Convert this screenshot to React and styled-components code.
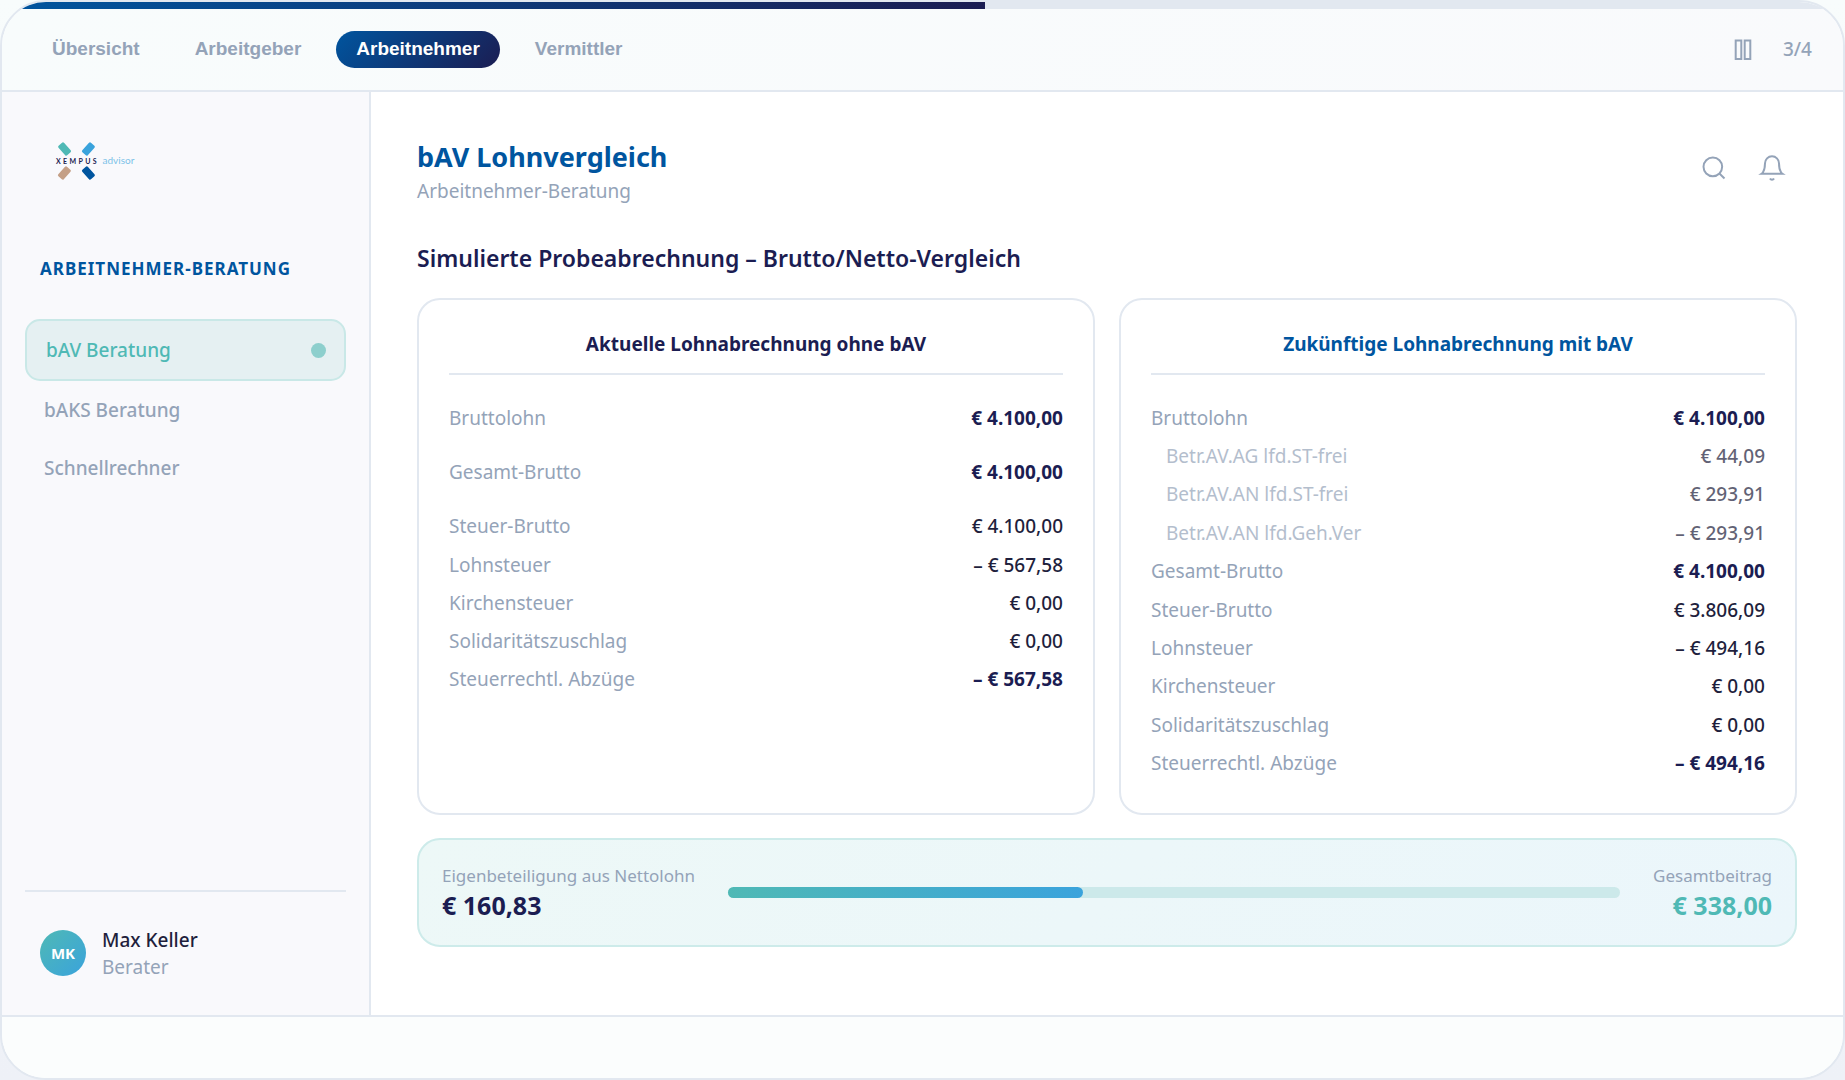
import React from 'react'
import styled, { createGlobalStyle, css } from 'styled-components'

const colors = {
  blue: '#00559f',
  navy: '#1b1d52',
  ink: '#1f1f3d',
  muted: '#94a3b8',
  teal: '#4fb9b5',
  sky: '#3aa3dc',
  line: '#e2e8f0'
}

const tabs = ['Übersicht', 'Arbeitgeber', 'Arbeitnehmer', 'Vermittler']

const navItems = ['bAV Beratung', 'bAKS Beratung', 'Schnellrechner']

const currentRows = [
  { label: 'Bruttolohn', value: '€ 4.100,00', strong: true, spaced: true },
  { label: 'Gesamt-Brutto', value: '€ 4.100,00', strong: true, spaced: true },
  { label: 'Steuer-Brutto', value: '€ 4.100,00' },
  { label: 'Lohnsteuer', value: '– € 567,58' },
  { label: 'Kirchensteuer', value: '€ 0,00' },
  { label: 'Solidaritätszuschlag', value: '€ 0,00' },
  { label: 'Steuerrechtl. Abzüge', value: '– € 567,58', strong: true }
]

const futureRows = [
  { label: 'Bruttolohn', value: '€ 4.100,00', strong: true },
  { label: 'Betr.AV.AG lfd.ST-frei', value: '€ 44,09', sub: true },
  { label: 'Betr.AV.AN lfd.ST-frei', value: '€ 293,91', sub: true },
  { label: 'Betr.AV.AN lfd.Geh.Ver', value: '– € 293,91', sub: true },
  { label: 'Gesamt-Brutto', value: '€ 4.100,00', strong: true },
  { label: 'Steuer-Brutto', value: '€ 3.806,09' },
  { label: 'Lohnsteuer', value: '– € 494,16' },
  { label: 'Kirchensteuer', value: '€ 0,00' },
  { label: 'Solidaritätszuschlag', value: '€ 0,00' },
  { label: 'Steuerrechtl. Abzüge', value: '– € 494,16', strong: true }
]

const Logo = () => (
  <LogoSvg viewBox="0 0 110 60" role="img" aria-label="Xempus advisor">
    <rect x="-6.4" y="-3.7" width="12.8" height="7.4" rx="1.4" fill={colors.teal} transform="translate(24.6 19) rotate(48)" />
    <rect x="-6.4" y="-3.7" width="12.8" height="7.4" rx="1.4" fill={colors.sky} transform="translate(48.4 19) rotate(-48)" />
    <rect x="-6.4" y="-3.7" width="12.8" height="7.4" rx="1.4" fill="#c49f86" transform="translate(24.4 43) rotate(-48)" />
    <rect x="-6.4" y="-3.7" width="12.8" height="7.4" rx="1.4" fill={colors.blue} transform="translate(48.4 43) rotate(48)" />
    <text x="16" y="33.5" fontFamily="Lato, sans-serif" fontWeight="700" fontSize="7" letterSpacing="2.4" fill={colors.navy}>XEMPUS</text>
    <text x="62.5" y="34" fontFamily="Lato, sans-serif" fontWeight="400" fontSize="10" fill="#7cc2e8">advisor</text>
  </LogoSvg>
)

const PauseIcon = () => (
  <Icon viewBox="0 0 28 28" strokeWidth="2">
    <rect x="6.7" y="4.5" width="5.6" height="18.5" />
    <rect x="15.7" y="4.5" width="5.6" height="18.5" />
  </Icon>
)

const SearchIcon = () => (
  <Icon viewBox="0 0 24 24" strokeWidth="1.7">
    <circle cx="11" cy="11" r="8" />
    <path d="m21 21-4.35-4.35" />
  </Icon>
)

const BellIcon = () => (
  <Icon viewBox="0 0 24 24" strokeWidth="1.7">
    <path d="M18 8A6 6 0 0 0 6 8c0 7-3 9-3 9h18s-3-2-3-9" />
    <path d="M13.73 21a2 2 0 0 1-3.46 0" />
  </Icon>
)

const Payslip = ({ title, rows, highlight }) => (
  <Card>
    <CardTitle $highlight={highlight}>{title}</CardTitle>
    <SlipTable $spaced={rows.some(row => row.spaced)} aria-label={title}>
      <tbody>
        {rows.map(row => (
          <SlipRow key={row.label} $spaced={row.spaced} $sub={row.sub}>
            <SlipLabel scope="row">{row.label}</SlipLabel>
            <SlipValue $strong={row.strong}>{row.value}</SlipValue>
          </SlipRow>
        ))}
      </tbody>
    </SlipTable>
  </Card>
)

export default function App() {
  return (
    <>
      <GlobalStyle />
      <Window>
        <StepTrack>
          <StepFill style={{ width: '53.4%' }} />
        </StepTrack>

        <TopBar>
          <Tabs>
            {tabs.map(tab => (
              <Tab key={tab} type="button" $active={tab === 'Arbeitnehmer'}>{tab}</Tab>
            ))}
          </Tabs>
          <Playback>
            <IconButton type="button" aria-label="Pause"><PauseIcon /></IconButton>
            <Counter>3/4</Counter>
          </Playback>
        </TopBar>

        <Body>
          <Sidebar>
            <Logo />
            <SidebarTitle>ARBEITNEHMER-BERATUNG</SidebarTitle>
            <Nav>
              {navItems.map((item, i) => (
                <NavItem key={item} type="button" $active={i === 0}>
                  {item}
                  {i === 0 && <NavDot />}
                </NavItem>
              ))}
            </Nav>
            <User>
              <Avatar>MK</Avatar>
              <UserInfo>
                <UserName>Max Keller</UserName>
                <UserRole>Berater</UserRole>
              </UserInfo>
            </User>
          </Sidebar>

          <Main>
            <PageHeader>
              <div>
                <Title>bAV Lohnvergleich</Title>
                <Subtitle>Arbeitnehmer-Beratung</Subtitle>
              </div>
              <Actions>
                <IconButton type="button" aria-label="Suche"><SearchIcon /></IconButton>
                <IconButton type="button" aria-label="Benachrichtigungen"><BellIcon /></IconButton>
              </Actions>
            </PageHeader>

            <SectionTitle>Simulierte Probeabrechnung – Brutto/Netto-Vergleich</SectionTitle>

            <Cards>
              <Payslip title="Aktuelle Lohnabrechnung ohne bAV" rows={currentRows} />
              <Payslip title="Zukünftige Lohnabrechnung mit bAV" rows={futureRows} highlight />
            </Cards>

            <Summary>
              <div>
                <SummaryLabel>Eigenbeteiligung aus Nettolohn</SummaryLabel>
                <SummaryValue>€ 160,83</SummaryValue>
              </div>
              <Meter>
                <MeterFill style={{ width: '39.8%' }} />
              </Meter>
              <SummaryTotal>
                <SummaryLabel>Gesamtbeitrag</SummaryLabel>
                <SummaryValue $accent>€ 338,00</SummaryValue>
              </SummaryTotal>
            </Summary>
          </Main>
        </Body>

        <Footer />
      </Window>
    </>
  )
}

const GlobalStyle = createGlobalStyle`
  * {
    box-sizing: border-box;
  }

  body {
    margin: 0;
    background: linear-gradient(180deg, #f8fcfc, #eef1f7);
    font-family: "Noto Sans", sans-serif;
    font-size: 19px;
    line-height: 27px;
    color: ${colors.ink};
  }

  h1, h2, h3, p {
    margin: 0;
  }
`

const Window = styled.div`
  display: flex;
  flex-direction: column;
  min-height: 100vh;
  border: 2px solid ${colors.line};
  border-radius: 46px;
  overflow: hidden;
  background: #fff;
`

const StepTrack = styled.div`
  height: 7px;
  background: ${colors.line};
`

const StepFill = styled.div`
  height: 100%;
  background: linear-gradient(90deg, ${colors.blue}, ${colors.navy});
`

const TopBar = styled.header`
  display: flex;
  align-items: center;
  justify-content: space-between;
  height: 83px;
  padding: 0 31px 0 30px;
  border-bottom: 2px solid ${colors.line};
  background: linear-gradient(135deg, #f8fcfc, #f9fafc);
`

const Tabs = styled.nav`
  display: flex;
  gap: 15px;
`

const Tab = styled.button`
  padding: 7px 20px 8px;
  border: 0;
  border-radius: 19px;
  background: none;
  font: 600 19px/22px "Liberation Sans", Arial, sans-serif;
  color: ${colors.muted};
  cursor: pointer;

  ${props => props.$active && css`
    background: linear-gradient(135deg, ${colors.blue}, ${colors.navy});
    color: #fff;
  `}
`

const Playback = styled.div`
  display: flex;
  align-items: center;
  gap: 26px;
`

const Counter = styled.span`
  font-weight: 500;
  color: ${colors.muted};
`

const Icon = styled.svg`
  display: block;
  width: 28px;
  height: 28px;
  fill: none;
  stroke: currentColor;
`

const IconButton = styled.button`
  padding: 0;
  border: 0;
  background: none;
  color: ${colors.muted};
  cursor: pointer;
`

const Body = styled.div`
  flex: 1;
  display: flex;
`

const Sidebar = styled.aside`
  display: flex;
  flex-direction: column;
  flex: 0 0 369px;
  padding: 38px 23px 34px;
  border-right: 2px solid ${colors.line};
  background: #f9f9fc;
`

const LogoSvg = styled.svg`
  width: 110px;
  height: 60px;
  margin-left: 15px;
`

const SidebarTitle = styled.h2`
  margin: 65px 15px 37px;
  font-size: 17px;
  font-weight: 700;
  letter-spacing: 1px;
  color: ${colors.blue};
`

const Nav = styled.nav`
  display: flex;
  flex-direction: column;
`

const NavItem = styled.button`
  display: flex;
  align-items: center;
  justify-content: space-between;
  padding: 15px 18px 15px 19px;
  border: 0;
  border-radius: 15px;
  background: none;
  font: inherit;
  font-weight: 500;
  line-height: 28px;
  color: ${colors.muted};
  cursor: pointer;

  ${props => props.$active && css`
    border: 2px solid #c9e8e7;
    background: #e5f0f2;
    color: ${colors.teal};
  `}
`

const NavDot = styled.span`
  width: 15px;
  height: 15px;
  border-radius: 50%;
  background: #8dcfcd;
`

const User = styled.div`
  display: flex;
  align-items: center;
  gap: 16px;
  margin-top: auto;
  padding: 33px 15px 0;
  border-top: 2px solid ${colors.line};
`

const Avatar = styled.div`
  display: flex;
  align-items: center;
  justify-content: center;
  width: 46px;
  height: 46px;
  border-radius: 50%;
  background: linear-gradient(135deg, ${colors.teal}, ${colors.sky});
  font-size: 15px;
  font-weight: 700;
  color: #fff;
`

const UserInfo = styled.div`
  padding-top: 2px;
`

const UserName = styled.p`
  font-weight: 500;
`

const UserRole = styled.p`
  color: ${colors.muted};
`

const Main = styled.main`
  flex: 1;
  padding: 45px 46px;
`

const PageHeader = styled.header`
  display: flex;
  align-items: center;
  justify-content: space-between;
  margin-bottom: 36px;
`

const Title = styled.h1`
  font-size: 27px;
  line-height: 40px;
  font-weight: 700;
  color: ${colors.blue};
`

const Subtitle = styled.p`
  margin-top: 1px;
  color: ${colors.muted};
`

const Actions = styled.div`
  display: flex;
  gap: 30px;
  padding: 0 11px 6px 0;
`

const SectionTitle = styled.h2`
  margin-bottom: 23px;
  font-size: 23px;
  line-height: 34px;
  font-weight: 600;
  color: ${colors.navy};
`

const Cards = styled.div`
  display: grid;
  grid-template-columns: 1fr 1fr;
  gap: 24px;
  margin-bottom: 23px;
`

const Card = styled.section`
  padding: 30px;
  border: 2px solid ${colors.line};
  border-radius: 23px;
  background: #fff;
`

const CardTitle = styled.h3`
  margin-bottom: 24px;
  padding-bottom: 15px;
  border-bottom: 2px solid ${colors.line};
  font-size: 19px;
  line-height: 28px;
  font-weight: 700;
  text-align: center;
  color: ${props => props.$highlight ? colors.blue : colors.navy};
`

const SlipTable = styled.table`
  width: 100%;
  height: ${props => props.$spaced ? '300px' : '384px'};
  border-collapse: collapse;
`

const SlipLabel = styled.th`
  padding: 0;
  text-align: left;
  font-weight: 400;
  color: ${colors.muted};
`

const SlipValue = styled.td`
  padding: 0;
  text-align: right;
  font-weight: ${props => props.$strong ? 700 : 500};
  color: ${props => props.$strong ? colors.navy : colors.ink};
`

const SlipRow = styled.tr`
  height: 38px;

  ${props => props.$spaced && css`
    height: 54px;

    ${SlipLabel}, ${SlipValue} {
      padding-bottom: 16px;
    }
  `}

  ${props => props.$sub && css`
    opacity: 0.7;

    ${SlipLabel} {
      padding-left: 15px;
    }
  `}
`

const Summary = styled.section`
  display: flex;
  align-items: center;
  gap: 33px;
  padding: 23px;
  border: 2px solid #cdebea;
  border-radius: 23px;
  background: linear-gradient(135deg, #edf8f7, #ebf6fb);
`

const SummaryLabel = styled.p`
  font-size: 17px;
  line-height: 26px;
  color: ${colors.muted};
`

const SummaryValue = styled.p`
  font-size: 25px;
  line-height: 33px;
  font-weight: 700;
  color: ${props => props.$accent ? colors.teal : colors.navy};
`

const SummaryTotal = styled.div`
  text-align: right;
`

const Meter = styled.div`
  flex: 1;
  height: 11px;
  border-radius: 6px;
  background: #cce9ea;
`

const MeterFill = styled.div`
  height: 100%;
  border-radius: 6px;
  background: linear-gradient(90deg, ${colors.teal}, ${colors.sky});
`

const Footer = styled.footer`
  height: 63px;
  border-top: 2px solid ${colors.line};
  background: #fbfdfd;
`
